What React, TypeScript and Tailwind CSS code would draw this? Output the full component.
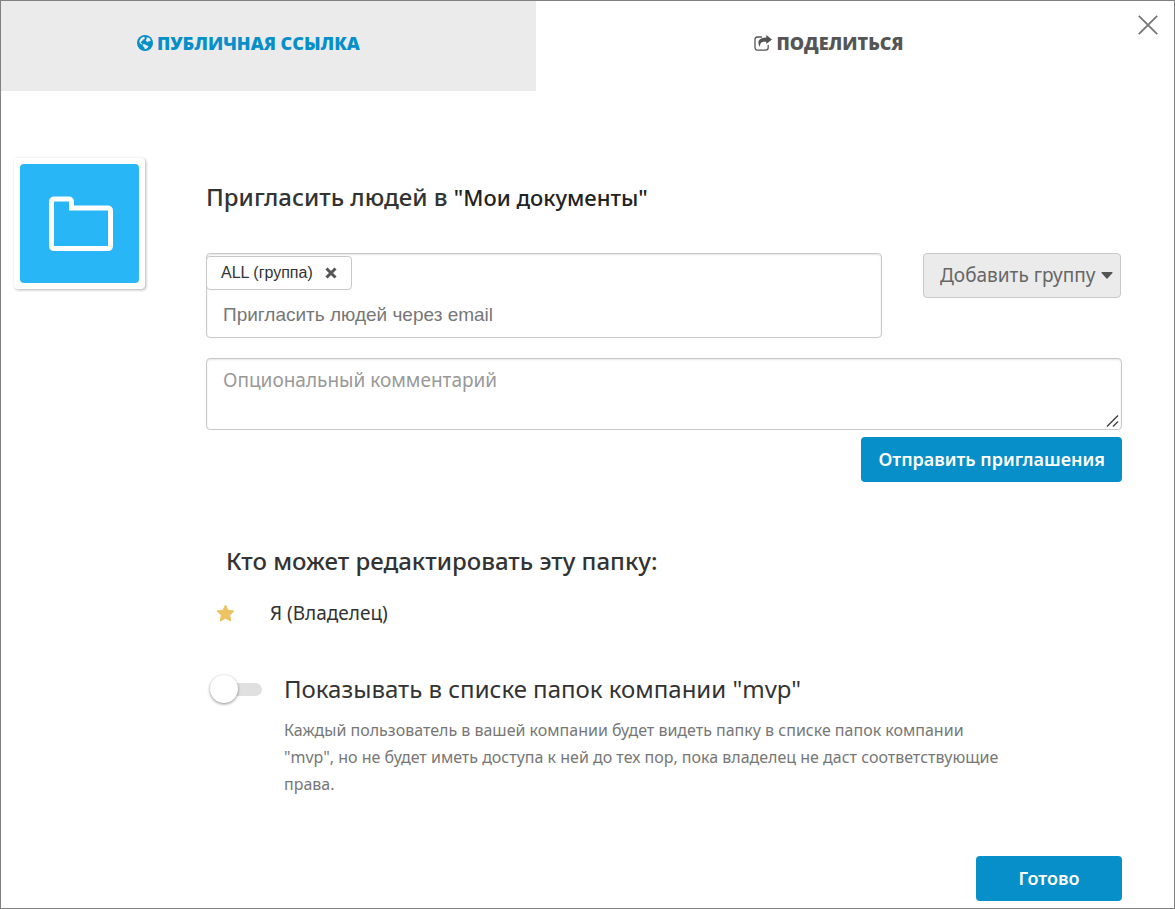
import React, { useState } from "react";

const GlobeIcon = () => (
  <svg viewBox="0 0 16 16" className="size-4 shrink-0" aria-hidden="true">
    <circle cx="8" cy="8" r="8" fill="currentColor" />
    <path
      d="M2.500 5.500 4.600 2.600 7 1.800 8 3 7.300 4 6 4.700 5.300 6 4 6.800 3.800 7.800 5.600 9 5.200 9.800 3.500 8.800 2.400 7.200zM9.800 2.200 12.400 3.100 13.900 5.200 12.700 6.400 11.700 5.900 10.900 7.200 9.600 6.500 8.600 5.300 9.500 4.300zM6 9.300 8 9.200 9.700 10.400 11.500 11 10.700 12.800 9 14 7.500 13.800 7.200 12.200 5.900 11z"
      fill="#ebebeb"
    />
  </svg>
);

const ShareIcon = () => (
  <svg viewBox="0 0 18 16" className="h-4 w-[18px] shrink-0" fill="none" aria-hidden="true">
    <path
      d="M7.500 2H3.600A2.600 2.600 0 0 0 1 4.600v8A2.600 2.600 0 0 0 3.600 15.200h8A2.600 2.600 0 0 0 14.200 12.600V10.500"
      stroke="currentColor"
      strokeWidth="1.300"
      strokeLinecap="round"
    />
    <path
      d="M12.300 0 18 4.500 12.300 9V6.700C8.500 6.500 5.600 7 6.100 12 3 8.500 3.500 2.600 12.300 2.600z"
      fill="currentColor"
    />
  </svg>
);

const FolderIcon = () => (
  <svg viewBox="0 0 64 56" className="h-14 w-16" fill="none" aria-hidden="true">
    <path
      d="M22.500 14.500V6Q22.500 3 19.500 3H5.500Q2.500 3 2.500 6V49.500Q2.500 52.500 5.500 52.500H58.500Q61.500 52.500 61.500 49.500V15Q61.500 12 58.500 12H22.500"
      stroke="white"
      strokeWidth="5"
    />
  </svg>
);

const StarIcon = () => (
  <svg viewBox="0 0 20 18" className="h-[18px] w-5" aria-hidden="true">
    <path
      d="M10.500 1 13 6.300 19 7 14.600 11 15.800 17 10.500 14.200 5.200 17 6.400 11 2 7 8 6.300z"
      fill="#edc262"
      stroke="#edc262"
      strokeLinejoin="round"
    />
  </svg>
);

const inputStyles =
  "rounded-[4px] border border-[#c8c8c8] bg-white shadow-[inset_0_1px_2px_rgba(0,0,0,0.1)]";
const primaryButton =
  "h-[45px] rounded-[4px] bg-[#078fc9] px-[17px] pb-0.5 text-lg font-semibold text-white";

export default function App() {
  const [groups, setGroups] = useState(["ALL (группа)"]);
  const [listed, setListed] = useState(false);

  return (
    <div className="relative flex min-h-screen flex-col border border-[#808080] bg-white font-['Noto_Sans','Open_Sans',sans-serif] text-[#333]">
      {/* Tabs */}
      <nav className="grid h-[90px] grid-cols-[535fr_638fr] font-['Open_Sans','Noto_Sans',sans-serif] text-lg font-extrabold">
        <button className="flex items-center justify-center gap-1 bg-[#ebebeb] pr-10 pb-1.5 text-[#078fc9]">
          <GlobeIcon />
          ПУБЛИЧНАЯ ССЫЛКА
        </button>
        <button className="flex items-center justify-center gap-1 pr-[52px] pb-1.5 text-[#555]">
          <ShareIcon />
          ПОДЕЛИТЬСЯ
        </button>
      </nav>
      <button aria-label="Закрыть" className="absolute top-3 right-3.5 p-0.5 text-[#777]">
        <svg viewBox="0 0 20 20" className="size-5" stroke="currentColor" strokeWidth="1.800">
          <path d="M.8.8 19.200 19.200M19.200.8.8 19.200" />
        </svg>
      </button>

      <main className="flex grow gap-[61px] pt-[67px] pr-[52px] pb-[7px] pl-[13px]">
        <div className="size-[131px] shrink-0 rounded-[4px] bg-white p-1.5 shadow-[1px_1px_3px_rgba(0,0,0,0.3)]">
          <div className="flex size-full items-center justify-center rounded-[4px] bg-[#29b6f6] pl-0.5">
            <FolderIcon />
          </div>
        </div>

        <div className="flex min-w-0 grow flex-col">
          <h1 className="mt-[23px] text-2xl leading-8 font-medium">
            Пригласить людей в{" "}
            <span className="text-[22px] text-[#222]">"Мои документы"</span>
          </h1>

          <div className="mt-10 flex items-start gap-[41px] pr-px">
            <div
              className={`flex h-[85px] min-w-0 grow flex-col items-start pt-0.5 font-['Liberation_Sans',Arial,sans-serif] ${inputStyles}`}
            >
              {groups.map((group) => (
                <span
                  key={group}
                  className="-ml-px flex h-[34px] shrink-0 items-center gap-3 rounded-[4px] border border-[#c8c8c8] bg-white px-3.5 text-base"
                >
                  {group}
                  <button
                    aria-label={`Удалить ${group}`}
                    onClick={() => setGroups(groups.filter((g) => g !== group))}
                  >
                    <svg viewBox="0 0 12 12" className="size-3" stroke="#555" strokeWidth="3">
                      <path d="M1.500 1.500 10.500 10.500M10.500 1.500 1.500 10.500" />
                    </svg>
                  </button>
                </span>
              ))}
              <input
                type="email"
                aria-label="Пригласить людей через email"
                placeholder="Пригласить людей через email"
                className="w-full grow px-4 pt-1 text-[19px] outline-none placeholder:text-[#777]"
              />
            </div>
            <div className="relative shrink-0">
              <select
                aria-label="Добавить группу"
                className="h-[45px] w-[198px] appearance-none rounded-[4px] border border-[#c8c8c8] bg-[#ebebeb] pl-4 text-[19px] text-[#666]"
              >
                <option>Добавить группу</option>
              </select>
              <svg
                viewBox="0 0 12 7"
                className="pointer-events-none absolute top-[19px] right-2 h-[7px] w-3"
                aria-hidden="true"
              >
                <path d="M1 0h10q1 .5.500 1L6.500 6.500q-.5.400-1 0L.5 1Q0 .5 1 0z" fill="#555" />
              </svg>
            </div>
          </div>

          <div className="relative mt-5 flex shrink-0">
            <textarea
              aria-label="Опциональный комментарий"
              placeholder="Опциональный комментарий"
              className={`h-[72px] w-full px-4 py-1.5 text-[19px] leading-[30px] outline-none placeholder:text-[#999] ${inputStyles}`}
            />
            <svg
              viewBox="0 0 14 14"
              className="pointer-events-none absolute right-0.5 bottom-0.5 size-3.5 bg-white"
              stroke="#444"
              strokeWidth="1.500"
              aria-hidden="true"
            >
              <path d="M1 12.500 12 1.500M7 12.500 12 7.500" />
            </svg>
          </div>
          <button className={`mt-[7px] shrink-0 self-end ${primaryButton}`}>
            Отправить приглашения
          </button>

          <h2 className="mt-[63px] ml-5 text-2xl leading-8 font-medium">
            Кто может редактировать эту папку:
          </h2>
          <ul className="mt-5 ml-[9px]">
            <li className="flex items-center gap-[35px] text-[19px] leading-8">
              <StarIcon />
              Я (Владелец)
            </li>
          </ul>

          <div className="mt-11 flex items-start gap-[22px]">
            <label className="relative mt-0.5 ml-1 flex h-7 w-[52px] shrink-0 cursor-pointer items-center">
              <input
                type="checkbox"
                role="switch"
                aria-labelledby="listed-title"
                aria-describedby="listed-hint"
                checked={listed}
                onChange={(e) => setListed(e.target.checked)}
                className="peer sr-only"
              />
              <span className="ml-3 h-[13px] w-10 rounded-full bg-[#e0e0e0] peer-checked:bg-[#83c7e4]" />
              <span className="absolute left-0 size-7 rounded-full bg-white shadow-[0_1px_3px_rgba(0,0,0,0.45)] transition-transform peer-checked:translate-x-6" />
            </label>
            <div>
              <h3 id="listed-title" className="text-2xl leading-8">
                Показывать в списке папок компании "mvp"
              </h3>
              <p id="listed-hint" className="mt-3 max-w-[727px] text-base leading-[27px] text-[#777]">
                Каждый пользователь в вашей компании будет видеть папку в списке папок компании
                "mvp", но не будет иметь доступа к ней до тех пор, пока владелец не даст
                соответствующие права.
              </p>
            </div>
          </div>

          <button className={`mt-auto w-[146px] shrink-0 self-end ${primaryButton}`}>Готово</button>
        </div>
      </main>
    </div>
  );
}
